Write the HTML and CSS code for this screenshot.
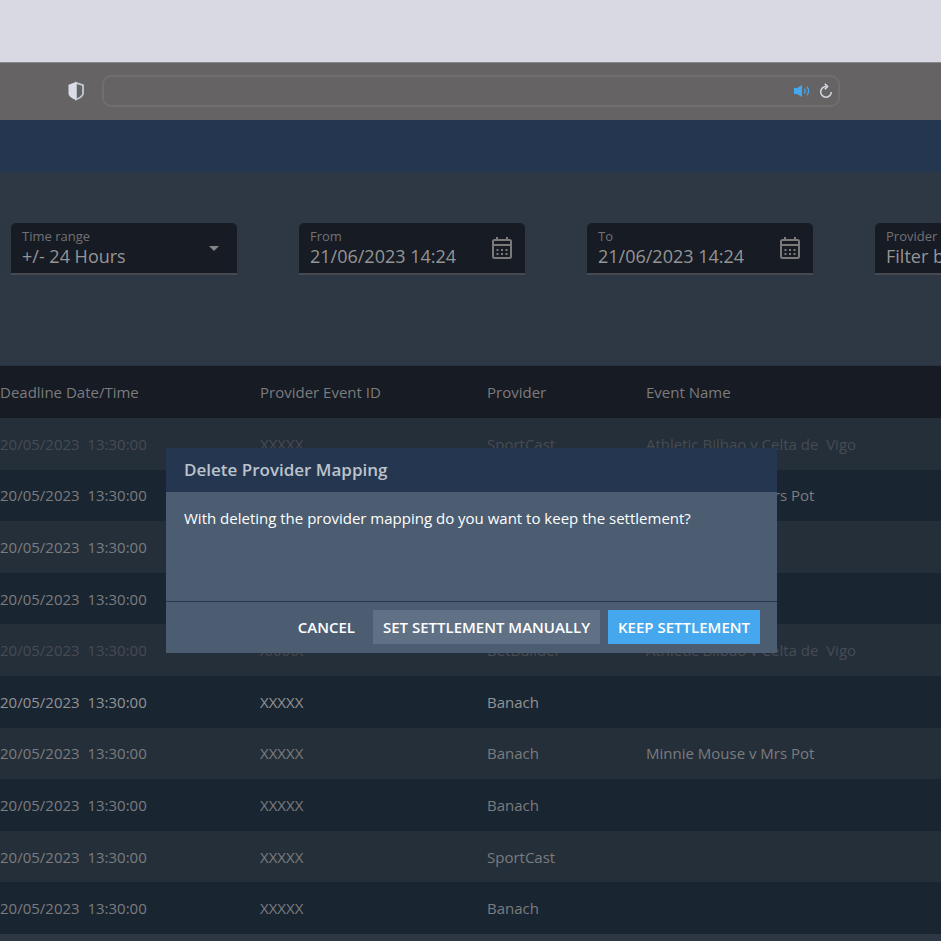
FILE: index.html
```html
<!DOCTYPE html>
<html lang="en">
<head>
    <meta charset="UTF-8">
    <meta name="viewport" content="width=device-width, initial-scale=1.0">
    <title>Provider Mapping</title>
    <link rel="stylesheet" href="styles.css">
</head>
<body>
    <div class="tab-strip"></div>
    <div class="toolbar">
        <svg class="shield" width="18" height="20" viewBox="0 0 18 20">
            <path d="M9 1.8 L16 4.2 V13 C15 15.6 12 17.4 9 18.4 Z" fill="none" stroke="#c3cbd6" stroke-width="1.8"/>
            <path d="M9 1 L1.5 3.8 V13 C2.5 16.2 6 18 9 19 Z" fill="#dcdce8"/>
        </svg>
        <div class="address-bar">
            <input class="address" type="text" aria-label="Address">
            <svg class="sound" width="18" height="14" viewBox="0 0 18 14">
                <path d="M1 4 H4 L9 1 V13 L4 10 H1 Z" fill="#45a7ed"/>
                <path d="M11.3 4.5 Q13 7 11.3 9.5 M14 2.6 Q17.2 7 14 11.4" fill="none" stroke="#45a7ed" stroke-width="1.3"/>
            </svg>
            <svg class="reload" width="14" height="16" viewBox="0 0 14 16">
                <path d="M7 3.6 A5.3 5.3 0 1 0 12.3 8.9" fill="none" stroke="#d5d9e3" stroke-width="1.5"/>
                <path d="M5.8 0.8 L8.6 3.6 L5.8 6.4" fill="none" stroke="#d5d9e3" stroke-width="1.5"/>
            </svg>
        </div>
    </div>
    <div class="app-header"></div>
    <div class="filters">
        <div class="field">
            <div class="field-text">
                <label for="range">Time range</label>
                <select id="range">
                    <option>+/- 24 Hours</option>
                </select>
            </div>
            <svg class="arrow" width="10" height="5" viewBox="0 0 10 5"><path d="M0 0 H10 L5 5 Z" fill="#858585"/></svg>
        </div>
        <div class="field">
            <div class="field-text">
                <label for="from">From</label>
                <input type="text" id="from" value="21/06/2023 14:24">
            </div>
            <svg class="calendar" width="20" height="22" viewBox="0 0 20 22" fill="none" stroke="#7a7a7b">
                <rect x="1" y="3" width="18" height="18" rx="1.5" stroke-width="2"/>
                <path d="M1 8 H19" stroke-width="2"/>
                <path d="M5 0 V3 M15 0 V3" stroke-width="2"/>
                <path d="M4.5 13 H15.5 M4.5 17 H15.5" stroke-width="2" stroke-dasharray="2 2.5"/>
            </svg>
        </div>
        <div class="field">
            <div class="field-text">
                <label for="to">To</label>
                <input type="text" id="to" value="21/06/2023 14:24">
            </div>
            <svg class="calendar" width="20" height="22" viewBox="0 0 20 22" fill="none" stroke="#7a7a7b">
                <rect x="1" y="3" width="18" height="18" rx="1.5" stroke-width="2"/>
                <path d="M1 8 H19" stroke-width="2"/>
                <path d="M5 0 V3 M15 0 V3" stroke-width="2"/>
                <path d="M4.5 13 H15.5 M4.5 17 H15.5" stroke-width="2" stroke-dasharray="2 2.5"/>
            </svg>
        </div>
        <div class="field">
            <div class="field-text">
                <label for="provider">Provider</label>
                <input type="text" id="provider" value="Filter by">
            </div>
        </div>
    </div>
    <table class="events">
        <thead>
            <tr>
                <th class="col-date">Deadline Date/Time</th>
                <th class="col-id">Provider Event ID</th>
                <th class="col-provider">Provider</th>
                <th>Event Name</th>
            </tr>
        </thead>
        <tbody>
            <tr class="faded"><td>20/05/2023  13:30:00</td><td>XXXXX</td><td>SportCast</td><td>Athletic Bilbao v Celta de  Vigo</td></tr>
            <tr><td>20/05/2023  13:30:00</td><td>XXXXX</td><td>Banach</td><td>Minnie Mouse v Mrs Pot</td></tr>
            <tr><td>20/05/2023  13:30:00</td><td>XXXXX</td><td>Banach</td><td></td></tr>
            <tr><td>20/05/2023  13:30:00</td><td>XXXXX</td><td>Banach</td><td></td></tr>
            <tr class="faded"><td>20/05/2023  13:30:00</td><td>XXXXX</td><td>BetBuilder</td><td>Athletic Bilbao v Celta de  Vigo</td></tr>
            <tr class="bright"><td>20/05/2023  13:30:00</td><td>XXXXX</td><td>Banach</td><td></td></tr>
            <tr><td>20/05/2023  13:30:00</td><td>XXXXX</td><td>Banach</td><td>Minnie Mouse v Mrs Pot</td></tr>
            <tr><td>20/05/2023  13:30:00</td><td>XXXXX</td><td>Banach</td><td></td></tr>
            <tr><td>20/05/2023  13:30:00</td><td>XXXXX</td><td>SportCast</td><td></td></tr>
            <tr><td>20/05/2023  13:30:00</td><td>XXXXX</td><td>Banach</td><td></td></tr>
        </tbody>
    </table>

    <div class="overlay">
        <div class="dialog" role="dialog" aria-labelledby="dialog-title">
            <h2 class="dialog-title" id="dialog-title">Delete Provider Mapping</h2>
            <p class="dialog-text">With deleting the provider mapping do you want to keep the settlement?</p>
            <div class="dialog-actions">
                <button class="btn">CANCEL</button>
                <button class="btn secondary">SET SETTLEMENT MANUALLY</button>
                <button class="btn primary">KEEP SETTLEMENT</button>
            </div>
        </div>
    </div>
</body>
</html>
```
FILE: styles.css
```css
* {
    box-sizing: border-box;
}

body {
    margin: 0;
    min-height: 100vh;
    overflow: hidden;
    background-color: #2e3844;
    color: #7b7c7e;
    font-family: "Open Sans", sans-serif;
    font-size: 15px;
}

.tab-strip {
    height: 62px;
    background-color: #d9d9e3;
}

.toolbar {
    display: flex;
    align-items: center;
    height: 58px;
    padding: 0 101px 2px 67px;
    gap: 17px;
    background-color: #656363;
    border-top: 1px solid #89888d;
}

.address-bar {
    flex: 1;
    display: flex;
    align-items: center;
    gap: 8px;
    height: 32px;
    padding: 0 5px 0 12px;
    border: 2px solid #706f6f;
    border-radius: 9px;
}

.address {
    flex: 1;
    border: none;
    background: none;
    color: #dcdce8;
    font: inherit;
}

.app-header {
    height: 52px;
    background-color: #253650;
}

/* Filters */
.filters {
    display: flex;
    gap: 62px;
    height: 194px;
    padding: 51px 0 0 11px;
    overflow: hidden;
    border-bottom: 1px solid #26323f;
}

.field {
    flex: 0 0 226px;
    display: flex;
    align-items: center;
    justify-content: space-between;
    height: 52px;
    padding: 0 13px 0 11px;
    background-color: #171b24;
    border-bottom: 2px solid #48494e;
    border-radius: 5px 5px 0 0;
}

.field-text {
    display: flex;
    flex-direction: column;
    padding-bottom: 2px;
}

.field label {
    font-size: 13px;
    line-height: 18px;
    color: #727274;
}

.field input,
.field select {
    width: 170px;
    height: 22px;
    padding: 0;
    border: none;
    background: none;
    color: #959596;
    font: inherit;
    font-size: 18px;
    line-height: 22px;
    appearance: none;
}

.arrow {
    margin-right: 5px;
}

/* Events table */
.events {
    width: 100%;
    height: 568px;
    border-collapse: collapse;
    table-layout: fixed;
    white-space: pre;
}

.events th {
    height: 52px;
    background-color: #171b24;
    font-weight: 400;
    text-align: left;
}

.events th,
.events td {
    padding: 0;
}

.col-date {
    width: 260px;
}

.col-id {
    width: 227px;
}

.col-provider {
    width: 159px;
}

.events tbody tr {
    background-color: #242f3a;
}

.events tbody tr:nth-child(even) {
    background-color: #1a2532;
}

.events .faded {
    color: #474b53;
}

.events .bright {
    color: #929395;
}

/* Dialog */
.overlay {
    position: fixed;
    inset: 0;
    display: flex;
    justify-content: center;
    align-items: flex-start;
    padding: 448px 20px 0 22px;
}

.dialog {
    width: 611px;
    background-color: #4c5d72;
    color: #fff;
}

.dialog-title {
    margin: 0;
    padding: 0 18px;
    background-color: #253650;
    color: #bcc3cc;
    font-size: 17px;
    font-weight: 600;
    line-height: 44px;
}

.dialog-text {
    margin: 0;
    min-height: 109px;
    padding: 15px 18px;
    line-height: 22px;
}

.dialog-actions {
    display: flex;
    justify-content: flex-end;
    gap: 8px;
    padding: 8px 17px 9px;
    border-top: 1px solid #253650;
}

.btn {
    height: 34px;
    padding: 0 10px;
    border: none;
    background: none;
    color: #fff;
    font: inherit;
    font-weight: 600;
    cursor: pointer;
}

.secondary {
    background-color: #607186;
}

.primary {
    background-color: #45a7ed;
}
```
